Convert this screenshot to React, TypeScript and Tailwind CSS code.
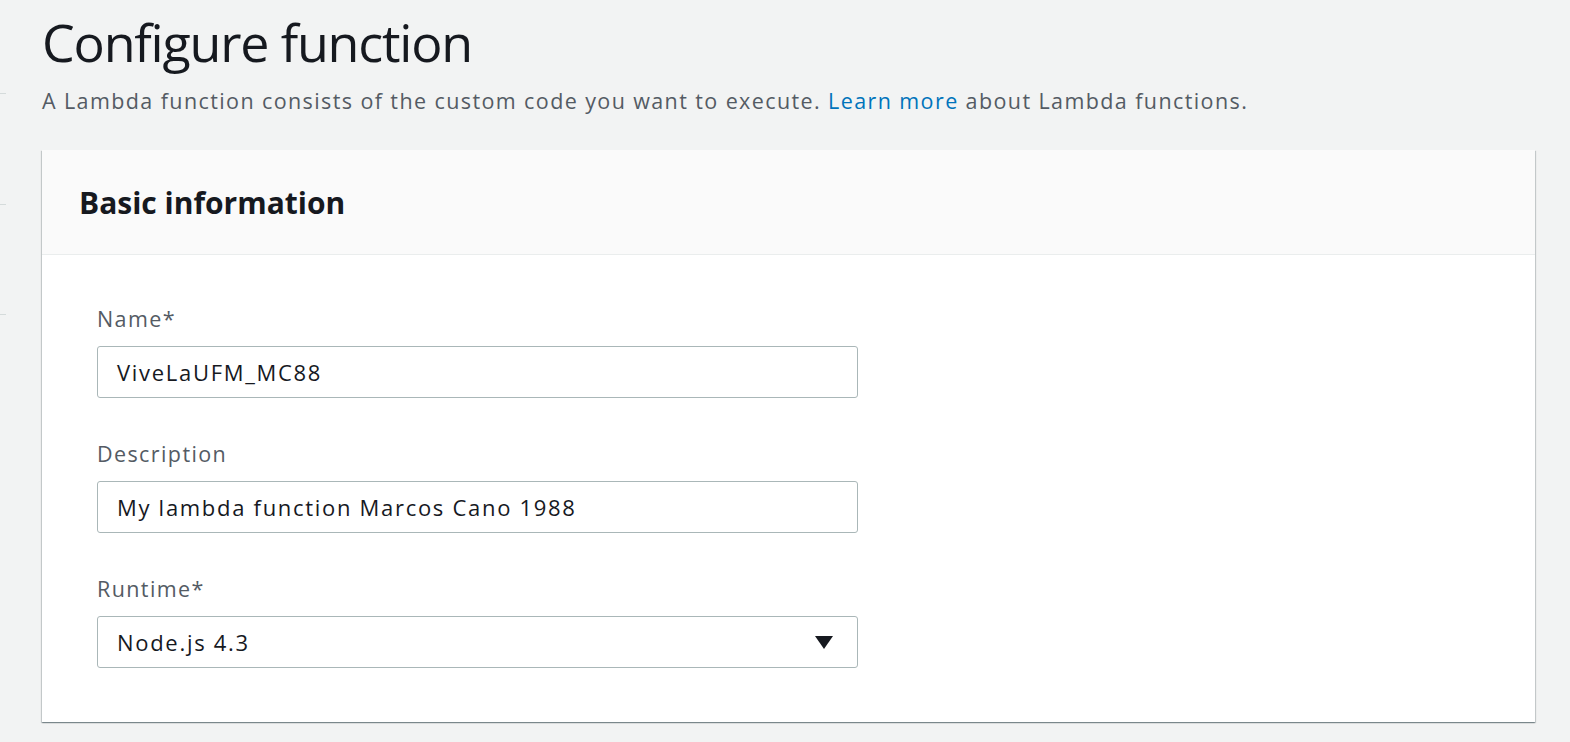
const fields = [
	{ label: "Name*", value: "ViveLaUFM_MC88" },
	{ label: "Description", value: "My lambda function Marcos Cano 1988" },
]

export default function App() {
	return (
		<div className="flex h-[742px] w-[1570px] overflow-hidden bg-[#f2f3f3] font-['Open_Sans',sans-serif]">
			<div className="flex w-[6px] shrink-0 flex-col pt-[93px]">
				<div className="h-[1px] bg-[#d5dbdb]" />
				<div className="mt-[110px] h-[1px] bg-[#d5dbdb]" />
				<div className="mt-[109px] h-[1px] bg-[#d5dbdb]" />
			</div>
			<div className="ml-[36px] w-[1493px] pt-[12px]">
				<h1 className="text-[52px] leading-[60px] tracking-[-1.2px] text-[#16191f]">Configure function</h1>
				<p className="mt-[15px] text-[21.5px] leading-[28px] tracking-[1.4px] text-[#545b64]">
					A Lambda function consists of the custom code you want to execute.{" "}
					<span className="text-[#0073bb]">Learn more</span> about Lambda functions.
				</p>
				<div className="mt-[35px] bg-white shadow-[0_1px_1px_0_rgba(0,28,36,0.3),1px_1px_1px_0_rgba(0,28,36,0.15),-1px_1px_1px_0_rgba(0,28,36,0.15)]">
					<div className="flex h-[105px] items-center border-b border-[#eaeded] bg-[#fafafa] px-[37px]">
						<h2 className="text-[30px] font-bold text-[#16191f]">Basic information</h2>
					</div>
					<div className="px-[55px] pt-[50px] pb-[54px]">
						{fields.map((f) => (
							<div key={f.label} className="mb-[42px]">
								<div className="text-[21.5px] leading-[28px] tracking-[1.4px] text-[#545b64]">{f.label}</div>
								<div className="mt-[13px] flex h-[52px] w-[761px] items-center rounded-[3px] border border-[#aab7b8] px-[19px] text-[22px] tracking-[1.7px] text-[#16191f]">
									{f.value}
								</div>
							</div>
						))}
						<div>
							<div className="text-[21.5px] leading-[28px] tracking-[1.4px] text-[#545b64]">Runtime*</div>
							<div className="mt-[13px] flex h-[52px] w-[761px] items-center justify-between rounded-[3px] border border-[#aab7b8] pr-[24px] pl-[19px] text-[22px] tracking-[1.7px] text-[#16191f]">
								<span>Node.js 4.3</span>
								<svg width="18" height="14" viewBox="0 0 18 14">
									<path d="M0 1 H18 L9 14 Z" fill="#16191f" />
								</svg>
							</div>
						</div>
					</div>
				</div>
			</div>
		</div>
	)
}
